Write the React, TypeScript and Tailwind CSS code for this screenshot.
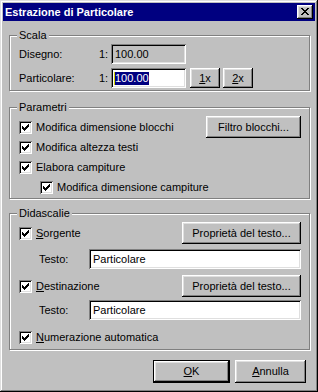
import type { ReactNode } from "react";

// Win95 bevel styles
const raised =
  "shadow-[inset_-1px_-1px_0_#000,inset_1px_1px_0_#fff,inset_-2px_-2px_0_#808080,inset_2px_2px_0_#dfdfdf]";
const sunken =
  "shadow-[inset_1px_1px_0_#808080,inset_-1px_-1px_0_#fff,inset_2px_2px_0_#000,inset_-2px_-2px_0_#dfdfdf]";

function CheckMark() {
  return (
    <svg className="absolute left-[3px] top-[3px]" width="7" height="7" viewBox="0 0 7 7" shapeRendering="crispEdges">
      <path
        fill="#000"
        d="M6 0h1v1h-1z M5 1h2v1h-2z M0 2h1v1h-1z M4 2h3v1h-3z M0 3h2v1h-2z M3 3h3v1h-3z M0 4h5v1h-5z M1 5h3v1h-3z M2 6h1v1h-1z"
      />
    </svg>
  );
}

function Check({ children, className = "" }: { children: ReactNode; className?: string }) {
  return (
    <div className={"flex items-center h-[20px] " + className}>
      <span className={"relative w-[13px] h-[13px] shrink-0 bg-white " + sunken}>
        <CheckMark />
      </span>
      <span className="ml-[4px]">{children}</span>
    </div>
  );
}

function Button({ children, className = "" }: { children: ReactNode; className?: string }) {
  return (
    <div className={"flex items-center justify-center bg-[#c0c0c0] " + raised + " " + className}>
      {children}
    </div>
  );
}

function Group({ title, className = "", children }: { title: string; className?: string; children: ReactNode }) {
  return (
    <div
      className={
        "relative border border-[#808080] shadow-[inset_1px_1px_0_#fff,1px_1px_0_#fff] " + className
      }
    >
      <span className="absolute left-[7px] top-[-7px] px-[2px] bg-[#c0c0c0] leading-[13px]">{title}</span>
      {children}
    </div>
  );
}

export default function App() {
  return (
    <div
      className="w-[318px] h-[392px] bg-[#c0c0c0] p-[3px] flex flex-col text-[11px] leading-[13px] text-black font-['Liberation_Sans',Arial,sans-serif] shadow-[inset_-1px_-1px_0_#000,inset_1px_1px_0_#dfdfdf,inset_-2px_-2px_0_#808080,inset_2px_2px_0_#fff]"
    >
      {/* Title bar */}
      <div className="h-[18px] bg-[#000080] flex items-center justify-between pl-[2px] pr-[2px]">
        <span className="text-white font-bold">Estrazione di Particolare</span>
        <div className={"relative w-[16px] h-[14px] bg-[#c0c0c0] " + raised}>
          <svg className="absolute left-[4px] top-[3px]" width="8" height="7" viewBox="0 0 8 7" shapeRendering="crispEdges">
            <path
              fill="#000"
              d="M0 0h2v1h-2z M6 0h2v1h-2z M1 1h2v1h-2z M5 1h2v1h-2z M2 2h4v1h-4z M3 3h2v1h-2z M2 4h4v1h-4z M1 5h2v1h-2z M5 5h2v1h-2z M0 6h2v1h-2z M6 6h2v1h-2z"
            />
          </svg>
        </div>
      </div>

      <div className="flex flex-col pl-[6px] pr-[5px] pt-[14px]">
        {/* Scala */}
        <Group title="Scala" className="h-[56px] pl-[9px] pt-[8px] flex flex-col gap-[4px]">
          <div className="flex items-center h-[20px]">
            <span className="w-[80px]">Disegno:</span>
            <span className="w-[12px]">1:</span>
            <div className={"w-[75px] h-[20px] flex items-center pl-[4px] bg-[#c0c0c0] " + sunken}>100.00</div>
          </div>
          <div className="flex items-center h-[20px]">
            <span className="w-[80px]">Particolare:</span>
            <span className="w-[12px]">1:</span>
            <div className={"w-[75px] h-[20px] flex items-center pl-[3px] bg-white " + sunken}>
              <span className="w-[1px] h-[13px] bg-[#d4d400]" />
              <span className="bg-[#000080] text-white">100.00</span>
            </div>
            <Button className="w-[30px] h-[20px] ml-[4px]">
              <span>
                <u>1</u>x
              </span>
            </Button>
            <Button className="w-[30px] h-[20px] ml-[3px]">
              <span>
                <u>2</u>x
              </span>
            </Button>
          </div>
        </Group>

        {/* Parametri */}
        <Group title="Parametri" className="mt-[16px] h-[92px] pl-[9px] pr-[8px] pt-[9px]">
          <div className="flex items-center justify-between h-[20px]">
            <Check>Modifica dimensione blocchi</Check>
            <Button className="w-[95px] h-[22px] -my-[1px]">Filtro blocchi...</Button>
          </div>
          <Check>Modifica altezza testi</Check>
          <Check>Elabora campiture</Check>
          <Check className="pl-[21px]">Modifica dimensione campiture</Check>
        </Group>

        {/* Didascalie */}
        <Group title="Didascalie" className="mt-[14px] h-[137px] pl-[9px] pr-[8px] pt-[8px] flex flex-col">
          <div className="flex items-center justify-between h-[22px]">
            <Check>
              <u>S</u>orgente
            </Check>
            <Button className="w-[119px] h-[22px]">Proprietà del testo...</Button>
          </div>
          <div className="flex items-center h-[20px] mt-[5px]">
            <span className="w-[70px] shrink-0 pl-[20px]">Testo:</span>
            <div className={"flex-1 h-[20px] flex items-center pl-[4px] bg-white " + sunken}>Particolare</div>
          </div>
          <div className="flex items-center justify-between h-[22px] mt-[6px]">
            <Check>
              <u>D</u>estinazione
            </Check>
            <Button className="w-[119px] h-[22px]">Proprietà del testo...</Button>
          </div>
          <div className="flex items-center h-[20px] mt-[3px]">
            <span className="w-[70px] shrink-0 pl-[20px]">Testo:</span>
            <div className={"flex-1 h-[20px] flex items-center pl-[4px] bg-white " + sunken}>Particolare</div>
          </div>
          <Check className="mt-[7px]">
            <u>N</u>umerazione automatica
          </Check>
        </Group>

        {/* OK / Annulla */}
        <div className="flex justify-end mt-[10px] pr-[4px]">
          <div className="border border-black">
            <Button className="w-[75px] h-[21px]">
              <span>
                <u>O</u>K
              </span>
            </Button>
          </div>
          <Button className="w-[71px] h-[23px] ml-[5px]">
            <span>
              <u>A</u>nnulla
            </span>
          </Button>
        </div>
      </div>
    </div>
  );
}
